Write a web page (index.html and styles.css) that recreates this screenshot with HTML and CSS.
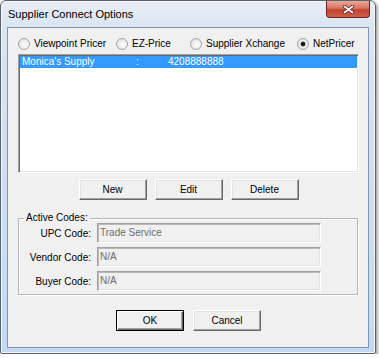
FILE: index.html
```html
<!DOCTYPE html>
<html lang="en">
<head>
    <meta charset="UTF-8">
    <meta name="viewport" content="width=device-width, initial-scale=1.0">
    <title>Supplier Connect Options</title>
    <link rel="stylesheet" href="styles.css">
</head>
<body>
    <div class="window">
        <div class="titlebar">
            <span class="title">Supplier Connect Options</span>
            <button class="close" title="Close">
                <svg width="11" height="9" viewBox="0 0 11 9">
                    <path d="M1.5 1.5 L9.5 7.5 M9.5 1.5 L1.5 7.5" stroke="#5c1c14" stroke-width="3.4" stroke-linecap="round"/>
                    <path d="M1.5 1.5 L9.5 7.5 M9.5 1.5 L1.5 7.5" stroke="#fff" stroke-width="1.8" stroke-linecap="round"/>
                </svg>
            </button>
        </div>

        <div class="client">
            <!-- fonte de preços -->
            <div class="radio-row">
                <label class="opt opt-vp"><span class="radio"></span>Viewpoint Pricer</label>
                <label class="opt opt-ez"><span class="radio"></span>EZ-Price</label>
                <label class="opt opt-sx"><span class="radio"></span>Supplier Xchange</label>
                <label class="opt"><span class="radio checked"></span>NetPricer</label>
            </div>

            <div class="listbox">
                <div class="row selected">
                    <span class="col-name">Monica's Supply</span>
                    <span class="col-sep">:</span>
                    <span class="col-num">4208888888</span>
                </div>
            </div>

            <div class="btn-row">
                <button class="btn">New</button>
                <button class="btn">Edit</button>
                <button class="btn">Delete</button>
            </div>

            <fieldset class="group">
                <legend>Active Codes:</legend>
                <div class="codes">
                    <label>UPC Code:</label>
                    <div class="field">Trade Service</div>
                    <label>Vendor Code:</label>
                    <div class="field">N/A</div>
                    <label>Buyer Code:</label>
                    <div class="field">N/A</div>
                </div>
            </fieldset>

            <div class="btn-row bottom">
                <button class="btn default">OK</button>
                <button class="btn">Cancel</button>
            </div>
        </div>
    </div>
</body>
</html>
```

FILE: styles.css
```css
/* Janela no estilo Windows 7 */
body {
    margin: 0;
    background-color: #fff;
    color: #000;
    font-family: "Liberation Sans", Arial, sans-serif;
    font-size: 10px;
}

.window {
    width: 376px;
    height: 354px;
    box-sizing: border-box;
    display: flex;
    flex-direction: column;
    padding: 0 6px 5px;
    border: 1px solid #59626e;
    border-radius: 6px 6px 2px 2px;
    background: linear-gradient(#e8eef6, #d8e4f1 30px, #c4d9f1);
    box-shadow: inset 0 0 0 1px #f4f8fc, 2px 2px 3px rgba(0, 0, 0, 0.35);
}

.titlebar {
    height: 26px;
    display: flex;
    justify-content: space-between;
    align-items: flex-start;
}

.title {
    padding: 7px 0 0 1px;
    font-size: 11px;
    line-height: 13px;
}

.close {
    width: 44px;
    height: 17px;
    margin-right: -1px;
    padding: 0;
    display: flex;
    align-items: center;
    justify-content: center;
    border: 1px solid #6e2219;
    border-top: none;
    border-radius: 0 0 4px 4px;
    background: linear-gradient(#e8a897, #d77462 45%, #c2412f 55%, #d0604a);
}

.client {
    flex: 1;
    padding: 0 9px 0 10px;
    border: 1px solid #8295ab;
    background-color: #f0f0f0;
}

/* Botões de rádio */
.radio-row {
    display: flex;
    height: 13px;
    margin-top: 9px;
}

.opt {
    display: flex;
    align-items: center;
    gap: 4px;
    line-height: 13px;
}

.opt-vp { width: 98px; }
.opt-ez { width: 74px; }
.opt-sx { width: 107px; }

.radio {
    width: 12px;
    height: 12px;
    box-sizing: border-box;
    border: 1px solid #a4a4a4;
    border-radius: 50%;
    background: radial-gradient(circle at 60% 60%, #fdfdfd 0, #e6e6e6 70%, #d4d4d4 100%);
}

.radio.checked {
    background: radial-gradient(circle, #111 0, #222 2px, #eee 2.8px, #e2e2e2 100%);
}

/* Lista */
.listbox {
    height: 119px;
    margin-top: 4px;
    box-sizing: border-box;
    padding: 1px;
    border: 1px solid;
    border-color: #a0a0a0 #fff #fff #a0a0a0;
    background-color: #fff;
    box-shadow: inset 1px 1px #696969, inset -1px -1px #e3e3e3;
}

.row {
    display: flex;
    height: 12px;
    line-height: 12px;
    padding-left: 2px;
}

.row.selected {
    background-color: #3399ff;
    color: #fff;
}

.col-name { width: 114px; }
.col-sep { width: 32px; }

/* Botões */
.btn-row {
    display: flex;
    justify-content: center;
    gap: 8px;
    margin-top: 6px;
}

.btn-row.bottom {
    gap: 9px;
    margin-top: 15px;
}

.btn {
    width: 68px;
    height: 21px;
    box-sizing: border-box;
    padding: 0;
    font: inherit;
    color: #000;
    background-color: #f0f0f0;
    border: 1px solid;
    border-color: #fff #696969 #696969 #fff;
    box-shadow: inset -1px -1px #a0a0a0, inset 1px 1px #e3e3e3;
}

.btn.default {
    border-color: #000;
    box-shadow: inset 1px 1px #fff, inset -1px -1px #696969, inset -2px -2px #a0a0a0;
}

/* Grupo de códigos */
.group {
    margin: 13px 1px 0 0;
    padding: 0 0 3px 0;
    border: 1px solid #b5b5b5;
    box-shadow: inset 1px 1px #fff, 1px 1px #fff;
}

.group legend {
    margin-left: 5px;
    padding: 0 2px;
    line-height: 10px;
}

.codes {
    display: grid;
    grid-template-columns: 72px 224px;
    grid-auto-rows: 20px;
    column-gap: 6px;
    row-gap: 4px;
}

.codes label {
    align-self: center;
    text-align: right;
}

.field {
    box-sizing: border-box;
    padding: 3px 0 0 2px;
    line-height: 12px;
    color: #6d6d6d;
    border: 1px solid;
    border-color: #a0a0a0 #fff #fff #a0a0a0;
    box-shadow: inset 1px 1px #b9b9b9, inset -1px -1px #e3e3e3;
}
```
